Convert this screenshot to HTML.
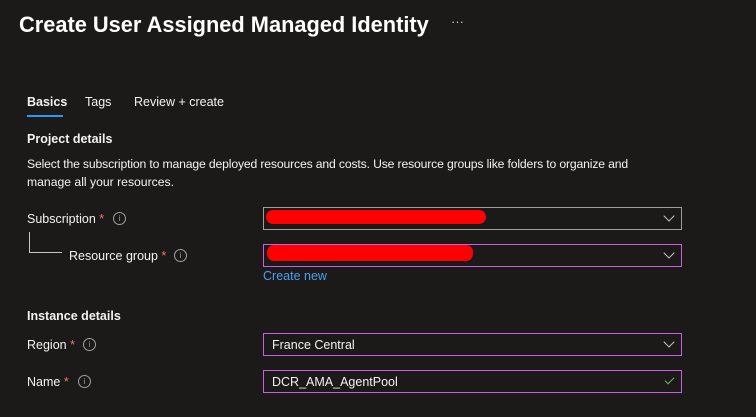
<!DOCTYPE html>
<html><head><style>
body{margin:0;width:756px;height:417px;background:#1b1a19;font-family:"Liberation Sans",sans-serif;color:#f3f2f1;position:relative;overflow:hidden}
div,span{position:absolute;white-space:nowrap}
.t{font-size:12.5px}
.b{font-weight:bold;font-size:12.5px}
.star{color:#f1707b}
.i{width:11px;height:11px;border:1px solid #a19f9d;border-radius:50%;font-size:8px;line-height:11px;text-align:center;color:#a19f9d}
.box{left:263px;width:417px;height:21px;border:1px solid #c85ee6}
.chev{right:8px;top:4px;width:7px;height:7px;border-right:1.3px solid #c8c6c4;border-bottom:1.3px solid #c8c6c4;transform:rotate(45deg)}
.red{background:#ff0000;border-radius:7px;height:14px}
</style></head><body>
<div style="left:19px;top:12px;font-size:21.8px;font-weight:bold;color:#fff">Create User Assigned Managed Identity</div>
<div style="left:451px;top:14px;font-size:13px;color:#c8c6c4">···</div>
<div class="t" style="left:27px;top:95px;font-weight:bold">Basics</div>
<div style="left:27px;top:115px;width:36px;height:2px;background:#2899f5"></div>
<div class="t" style="left:85px;top:95px">Tags</div>
<div class="t" style="left:134px;top:95px">Review + create</div>
<div class="b" style="left:27px;top:132px">Project details</div>
<div style="left:27px;top:157px;font-size:12.2px;letter-spacing:-0.15px">Select the subscription to manage deployed resources and costs. Use resource groups like folders to organize and</div>
<div style="left:27px;top:175px;font-size:12.2px">manage all your resources.</div>
<div class="t" style="left:27px;top:212px">Subscription <span class="star" style="position:static">*</span></div>
<div class="i" style="left:113px;top:212px">i</div>
<div style="left:29px;top:232px;width:32px;height:20px;border-left:1px solid #c8c6c4;border-bottom:1px solid #c8c6c4"></div>
<div class="t" style="left:69px;top:249px">Resource group <span class="star" style="position:static">*</span></div>
<div class="i" style="left:174px;top:249px">i</div>
<div class="box" style="top:207px;border-color:#a19f9d"><div class="red" style="left:2px;top:2px;width:220px"></div><div class="chev"></div></div>
<div class="box" style="top:244px"><div class="red" style="left:3px;top:0px;width:206px;height:16px"></div><div class="chev"></div></div>
<div class="t" style="left:263px;top:269px;color:#4aa0f0">Create new</div>
<div class="b" style="left:27px;top:309px">Instance details</div>
<div class="t" style="left:27px;top:338px">Region <span class="star" style="position:static">*</span></div>
<div class="i" style="left:83px;top:338px">i</div>
<div class="t" style="left:27px;top:375px">Name <span class="star" style="position:static">*</span></div>
<div class="i" style="left:78px;top:375px">i</div>
<div class="box" style="top:333px"><div class="t" style="left:8px;top:4px">France Central</div><div class="chev"></div></div>
<div class="box" style="top:370px"><div class="t" style="left:8px;top:4px">DCR_AMA_AgentPool</div><div style="right:9px;top:4px;width:4px;height:8px;border-right:1.3px solid #6bb36b;border-bottom:1.3px solid #6bb36b;transform:rotate(45deg)"></div></div>
</body></html>
